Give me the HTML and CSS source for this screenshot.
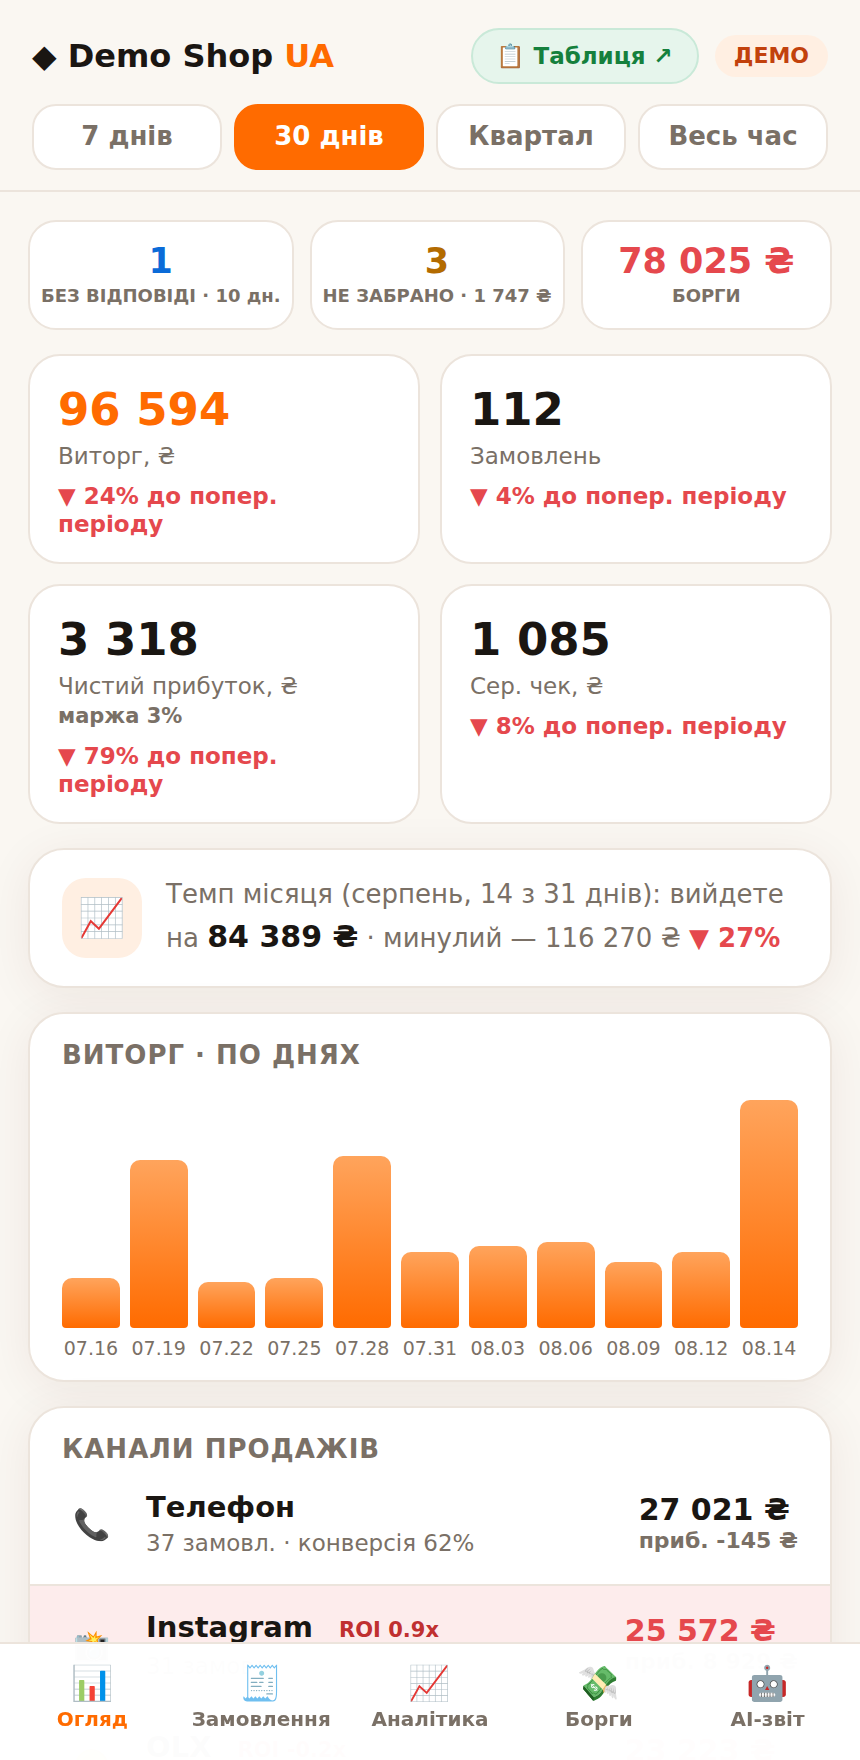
FILE: index.html
```html
<!DOCTYPE html>
<html lang="uk">
<head>
<meta charset="utf-8">
<meta name="viewport" content="width=device-width, initial-scale=1">
<title>Demo Shop UA</title>
<link rel="stylesheet" href="styles.css">
</head>
<body>
<div class="app">
  <header class="header">
    <div class="topbar">
      <h1 class="brand">◆ Demo Shop <span class="brand-accent">UA</span></h1>
      <a class="sheet-link" href="#sheet">📋 Таблиця ↗</a>
      <span class="badge">ДЕМО</span>
    </div>
    <div class="periods">
      <button type="button" class="period">7 днів</button>
      <button type="button" class="period period-active" aria-pressed="true">30 днів</button>
      <button type="button" class="period">Квартал</button>
      <button type="button" class="period">Весь час</button>
    </div>
  </header>

  <main class="main">
    <section class="alerts">
      <div class="alert">
        <div class="alert-value blue">1</div>
        <div class="alert-label">БЕЗ ВІДПОВІДІ · 10 дн.</div>
      </div>
      <div class="alert">
        <div class="alert-value amber">3</div>
        <div class="alert-label">НЕ ЗАБРАНО · 1 747 ₴</div>
      </div>
      <div class="alert">
        <div class="alert-value red">78 025 ₴</div>
        <div class="alert-label">БОРГИ</div>
      </div>
    </section>

    <section class="kpis">
      <div class="kpi">
        <div class="kpi-value orange">96 594</div>
        <div class="kpi-label">Виторг, ₴</div>
        <div class="kpi-delta">▼ 24% до попер. періоду</div>
      </div>
      <div class="kpi">
        <div class="kpi-value">112</div>
        <div class="kpi-label">Замовлень</div>
        <div class="kpi-delta">▼ 4% до попер. періоду</div>
      </div>
      <div class="kpi">
        <div class="kpi-value">3 318</div>
        <div class="kpi-label">Чистий прибуток, ₴</div>
        <div class="kpi-note">маржа 3%</div>
        <div class="kpi-delta">▼ 79% до попер. періоду</div>
      </div>
      <div class="kpi">
        <div class="kpi-value">1 085</div>
        <div class="kpi-label">Сер. чек, ₴</div>
        <div class="kpi-delta">▼ 8% до попер. періоду</div>
      </div>
    </section>

    <section class="card pace">
      <div class="pace-icon">📈</div>
      <p class="pace-text">Темп місяця (серпень, 14 з 31 днів): вийдете на <b class="pace-sum">84 389 ₴</b> · минулий — 116 270 ₴ <b class="red">▼ 27%</b></p>
    </section>

    <section class="card chart-card">
      <h2 class="card-title">ВИТОРГ · ПО ДНЯХ</h2>
      <div class="chart">
        <div class="col"><div class="bar" style="height:50px"></div><span>07.16</span></div>
        <div class="col"><div class="bar" style="height:168px"></div><span>07.19</span></div>
        <div class="col"><div class="bar" style="height:46px"></div><span>07.22</span></div>
        <div class="col"><div class="bar" style="height:50px"></div><span>07.25</span></div>
        <div class="col"><div class="bar" style="height:172px"></div><span>07.28</span></div>
        <div class="col"><div class="bar" style="height:76px"></div><span>07.31</span></div>
        <div class="col"><div class="bar" style="height:82px"></div><span>08.03</span></div>
        <div class="col"><div class="bar" style="height:86px"></div><span>08.06</span></div>
        <div class="col"><div class="bar" style="height:66px"></div><span>08.09</span></div>
        <div class="col"><div class="bar" style="height:76px"></div><span>08.12</span></div>
        <div class="col"><div class="bar" style="height:228px"></div><span>08.14</span></div>
      </div>
    </section>

    <section class="card channels">
      <h2 class="card-title">КАНАЛИ ПРОДАЖІВ</h2>
      <div class="channel">
        <div class="channel-icon">📞</div>
        <div class="channel-info">
          <div class="channel-name">Телефон</div>
          <div class="channel-sub">37 замовл. · конверсія 62%</div>
        </div>
        <div class="channel-sum">27 021 ₴<div class="channel-profit">приб. -145 ₴</div></div>
      </div>
      <div class="channel channel-loss">
        <div class="channel-icon">📸</div>
        <div class="channel-info">
          <div class="channel-name">Instagram <span class="roi">ROI 0.9x</span></div>
          <div class="channel-sub">31 замовл.</div>
        </div>
        <div class="channel-sum">25 572 ₴<div class="channel-profit">приб. 8 929 ₴</div></div>
      </div>
      <div class="channel channel-loss">
        <div class="channel-icon">🟡</div>
        <div class="channel-info">
          <div class="channel-name">OLX <span class="roi">ROI -0.2x</span></div>
          <div class="channel-sub">24 замовл.</div>
        </div>
        <div class="channel-sum">23 223 ₴<div class="channel-profit">приб. 1 320 ₴</div></div>
      </div>
    </section>
  </main>

  <nav class="nav">
    <a class="nav-item nav-active" href="#overview"><span class="nav-icon">📊</span>Огляд</a>
    <a class="nav-item" href="#orders"><span class="nav-icon">🧾</span>Замовлення</a>
    <a class="nav-item" href="#analytics"><span class="nav-icon">📈</span>Аналітика</a>
    <a class="nav-item" href="#debts"><span class="nav-icon">💸</span>Борги</a>
    <a class="nav-item" href="#ai"><span class="nav-icon">🤖</span>AI-звіт</a>
  </nav>
</div>
</body>
</html>
```
FILE: styles.css
```css
:root {
  --bg: #faf7f2;
  --card: #ffffff;
  --line: #ece4dc;
  --ink: #1a1612;
  --muted: #7a7066;
  --orange: #ff6b00;
  --red: #e5484d;
}

* { box-sizing: border-box; }

body {
  margin: 0;
  background: var(--bg);
  color: var(--ink);
  font-family: "DejaVu Sans", "Noto Color Emoji", sans-serif;
  font-size: 24px;
}

h1, h2, p { margin: 0; }

.app {
  height: 100vh;
  overflow-y: auto;
  scrollbar-width: none;
}

.header {
  padding: 28px 32px 20px;
  border-bottom: 2px solid var(--line);
}

.topbar {
  display: flex;
  align-items: center;
  gap: 16px;
  margin-bottom: 20px;
}

.brand {
  flex: 1;
  font-size: 32px;
  line-height: 38px;
}

.brand-accent, .orange { color: var(--orange); }
.blue { color: #0b6bd8; }
.amber { color: #b36b00; }
.red { color: var(--red); }

.sheet-link {
  padding: 12px 24px;
  border: 2px solid #c9e9d8;
  border-radius: 28px;
  background: #e6f5ec;
  color: #15803d;
  font-size: 23px;
  font-weight: 700;
  line-height: 28px;
  text-decoration: none;
}

.badge {
  padding: 8px 19px;
  border-radius: 21px;
  background: #ffefe2;
  color: #c2410c;
  font-size: 22px;
  font-weight: 700;
  line-height: 26px;
}

.periods {
  display: grid;
  grid-template-columns: repeat(4, 1fr);
  gap: 12px;
}

.period {
  padding: 15px 0 17px;
  border: 2px solid var(--line);
  border-radius: 24px;
  background: var(--card);
  color: var(--muted);
  font-family: inherit;
  font-size: 26px;
  font-weight: 700;
  line-height: 30px;
}

.period-active {
  border-color: var(--orange);
  background: var(--orange);
  color: #fff;
}

.main {
  display: flex;
  flex-direction: column;
  gap: 24px;
  padding: 28px 28px 140px;
}

.alerts {
  display: flex;
  gap: 16px;
}

.alert {
  flex: 1;
  padding: 16px 11px 20px;
  border: 2px solid var(--line);
  border-radius: 28px;
  background: var(--card);
  text-align: center;
  white-space: nowrap;
}

.alert-value {
  font-size: 35px;
  font-weight: 700;
  line-height: 46px;
}

.alert-label {
  color: var(--muted);
  font-size: 18px;
  font-weight: 700;
  line-height: 24px;
}

.kpis {
  display: grid;
  grid-template-columns: repeat(2, 1fr);
  gap: 20px;
}

.kpi {
  padding: 26px 28px 24px;
  border: 2px solid var(--line);
  border-radius: 32px;
  background: var(--card);
}

.kpi-value {
  font-size: 45px;
  font-weight: 700;
  line-height: 56px;
}

.kpi-label {
  margin-top: 3px;
  color: var(--muted);
  font-size: 23px;
  line-height: 30px;
}

.kpi-note {
  color: var(--muted);
  font-size: 21px;
  font-weight: 700;
  line-height: 30px;
}

.kpi-delta {
  margin-top: 11px;
  color: var(--red);
  font-size: 23px;
  font-weight: 700;
  line-height: 28px;
}

.card {
  border: 2px solid var(--line);
  border-radius: 36px;
  background: var(--card);
  box-shadow: 0 8px 48px rgba(80, 30, 20, 0.07);
}

.pace {
  display: flex;
  align-items: center;
  gap: 24px;
  padding: 22px 32px;
}

.pace-icon {
  flex: none;
  width: 80px;
  height: 80px;
  border-radius: 24px;
  background: #ffefe2;
  font-size: 38px;
  line-height: 80px;
  text-align: center;
}

.pace-text {
  padding-bottom: 4px;
  color: var(--muted);
  font-size: 26px;
  line-height: 44px;
}

.pace-sum {
  color: var(--ink);
  font-size: 30px;
  line-height: 40px;
}

.card-title {
  color: var(--muted);
  font-size: 26px;
  line-height: 30px;
  letter-spacing: 1px;
}

.chart-card { padding: 26px 32px 20px; }

.chart {
  display: flex;
  align-items: flex-end;
  gap: 10px;
  height: 268px;
  margin-top: 22px;
}

.col {
  flex: 1;
  min-width: 0;
  color: var(--muted);
  font-size: 19px;
  line-height: 24px;
  text-align: center;
}

.bar {
  margin-bottom: 8px;
  border-radius: 10px 10px 4px 4px;
  background: linear-gradient(#ffa45c, var(--orange));
}

.channels { overflow: hidden; }

.channels .card-title { padding: 26px 32px 0; }

.channel {
  display: flex;
  align-items: center;
  gap: 24px;
  height: 120px;
  padding: 0 32px;
}

.channel-loss {
  border-top: 2px solid var(--line);
  background: #fdecec;
}

.channel-icon {
  flex: none;
  width: 60px;
  font-size: 30px;
  text-align: center;
}

.channel-info { flex: 1; }

.channel-name {
  font-size: 29px;
  font-weight: 700;
  line-height: 38px;
}

.roi {
  margin-left: 16px;
  color: #c03030;
  font-size: 21px;
}

.channel-sub {
  color: var(--muted);
  font-size: 23px;
  line-height: 34px;
}

.channel-sum {
  font-size: 30px;
  font-weight: 700;
  line-height: 34px;
}

.channel-profit {
  color: var(--muted);
  font-size: 22px;
  line-height: 28px;
}

.channel-loss .channel-sum { color: var(--red); }

.nav {
  position: fixed;
  right: 0;
  bottom: 0;
  left: 0;
  display: grid;
  grid-template-columns: repeat(5, 1fr);
  padding: 15px 8px 29px;
  border-top: 2px solid var(--line);
  background: rgba(255, 255, 255, 0.99);
}

.nav-item {
  display: flex;
  flex-direction: column;
  align-items: center;
  color: var(--muted);
  font-size: 20px;
  font-weight: 700;
  line-height: 24px;
  text-decoration: none;
}

.nav-icon {
  font-size: 34px;
  font-weight: 400;
  line-height: 48px;
}

.nav-active { color: var(--orange); }
```
